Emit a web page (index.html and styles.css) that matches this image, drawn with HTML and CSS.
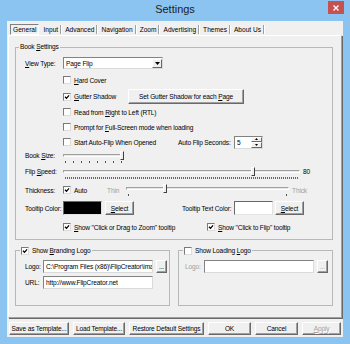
FILE: index.html
```html
<!DOCTYPE html>
<html>
  <head>
    <meta charset="UTF-8" />
    <title>Settings</title>
    <link rel="stylesheet" href="styles.css">
  </head>
  <body>
    <div class="window">
      <div class="titlebar">
        <span class="title">Settings</span>
        <span class="close">
          <svg width="6" height="6" viewBox="0 0 6 6"><path d="M0.5 0.5 L5.5 5.5 M5.5 0.5 L0.5 5.5" stroke="#fff" stroke-width="1.3"/></svg>
        </span>
      </div>

      <div class="client">
        <div class="tabs">
          <span class="tab active">General</span>
          <span class="tab">Input</span>
          <span class="tab">Advanced</span>
          <span class="tab">Navigation</span>
          <span class="tab">Zoom</span>
          <span class="tab">Advertising</span>
          <span class="tab">Themes</span>
          <span class="tab">About Us</span>
        </div>

        <div class="panel">
          <fieldset class="group book">
            <legend>Book <u>S</u>ettings</legend>

            <div class="row row-view">
              <span class="lbl"><u>V</u>iew Type:</span>
              <div class="field combo">
                <span class="combo-text">Page Flip</span>
                <span class="drop"><svg width="5" height="3" viewBox="0 0 5 3"><path d="M0 0 H5 L2.5 3 Z" fill="#000"/></svg></span>
              </div>
            </div>

            <div class="row row-hard">
              <span class="lbl"></span>
              <label class="check"><span class="box"></span><span><u>H</u>ard Cover</span></label>
            </div>

            <div class="row row-gutter">
              <span class="lbl"></span>
              <label class="check c-gutter"><span class="box"><svg width="6" height="6" viewBox="0 0 6 6"><path d="M1 2.8 L2.5 4.3 L5 1.4" fill="none" stroke="#000" stroke-width="1.3"/></svg></span><span><u>G</u>utter Shadow</span></label>
              <button class="btn btn-gutter">Set Gutter Shadow for each <u>P</u>age</button>
            </div>

            <div class="row row-rtl">
              <span class="lbl"></span>
              <label class="check"><span class="box"></span><span>Read from <u>R</u>ight to Left (RTL)</span></label>
            </div>

            <div class="row row-prompt">
              <span class="lbl"></span>
              <label class="check"><span class="box"></span><span>Prompt for <u>F</u>ull-Screen mode when loading</span></label>
            </div>

            <div class="row row-auto">
              <span class="lbl"></span>
              <label class="check c-auto"><span class="box"></span><span>Start Auto-Flip When Opened</span></label>
              <span class="lbl-seconds">Auto Flip Seconds:</span>
              <div class="field spin">
                <span class="spin-val">5</span>
                <span class="spin-btns">
                  <span class="spin-btn"><svg width="3" height="2" viewBox="0 0 3 2"><path d="M0 2 H3 L1.5 0 Z" fill="#000"/></svg></span>
                  <span class="spin-btn"><svg width="3" height="2" viewBox="0 0 3 2"><path d="M0 0 H3 L1.5 2 Z" fill="#000"/></svg></span>
                </span>
              </div>
            </div>

            <div class="row row-slider row-size">
              <span class="lbl">Book <u>S</u>ize:</span>
              <div class="slider slider-size">
                <div class="track"></div>
                <div class="ticks"></div>
                <span class="thumb" style="left: 57px"></span>
              </div>
            </div>

            <div class="row row-slider row-speed">
              <span class="lbl">Flip <u>S</u>peed:</span>
              <div class="slider slider-speed">
                <div class="track"></div>
                <div class="ticks"></div>
                <span class="thumb" style="left: 188px"></span>
              </div>
              <span class="slider-value">80</span>
            </div>

            <div class="row row-thick">
              <span class="lbl">Thickness:</span>
              <label class="check c-thick"><span class="box"><svg width="6" height="6" viewBox="0 0 6 6"><path d="M1 2.8 L2.5 4.3 L5 1.4" fill="none" stroke="#000" stroke-width="1.3"/></svg></span><span>Auto</span></label>
              <span class="muted thin">Thin</span>
              <div class="slider slider-thick">
                <div class="track"></div>
                <div class="ticks"></div>
                <span class="thumb" style="left: 37px"></span>
              </div>
              <span class="muted thick">Thick</span>
            </div>

            <div class="row row-color">
              <span class="lbl">Tooltip Color:</span>
              <span class="swatch swatch-black"></span>
              <button class="btn btn-select"><u>S</u>elect</button>
              <span class="lbl-textcolor">Tooltip Text Color:</span>
              <span class="swatch"></span>
              <button class="btn btn-select btn-select2"><u>S</u>elect</button>
            </div>

            <div class="row row-show">
              <span class="lbl"></span>
              <label class="check c-zoom"><span class="box"><svg width="6" height="6" viewBox="0 0 6 6"><path d="M1 2.8 L2.5 4.3 L5 1.4" fill="none" stroke="#000" stroke-width="1.3"/></svg></span><span><u>S</u>how "Click or Drag to Zoom" tooltip</span></label>
              <label class="check"><span class="box"><svg width="6" height="6" viewBox="0 0 6 6"><path d="M1 2.8 L2.5 4.3 L5 1.4" fill="none" stroke="#000" stroke-width="1.3"/></svg></span><span><u>S</u>how "Click to Flip" tooltip</span></label>
            </div>
          </fieldset>

          <div class="groups">
            <fieldset class="group logo-group">
              <legend>
                <label class="check"><span class="box"><svg width="6" height="6" viewBox="0 0 6 6"><path d="M1 2.8 L2.5 4.3 L5 1.4" fill="none" stroke="#000" stroke-width="1.3"/></svg></span><span>Show <u>B</u>randing Logo</span></label>
              </legend>
              <div class="row row-logo">
                <span class="lbl-small">Logo:</span>
                <div class="field path">C:\Program Files (x86)\FlipCreator\ima</div>
                <button class="btn btn-more">...</button>
              </div>
              <div class="row row-url">
                <span class="lbl-small">URL:</span>
                <div class="field path">http://www.FlipCreator.net</div>
              </div>
            </fieldset>

            <fieldset class="group logo-group loading">
              <legend>
                <label class="check"><span class="box"></span><span>Show Loading <u>L</u>ogo</span></label>
              </legend>
              <div class="row row-logo">
                <span class="lbl-small muted">Logo:</span>
                <div class="field path"></div>
                <button class="btn btn-more disabled">...</button>
              </div>
            </fieldset>
          </div>
        </div>

        <div class="footer">
          <button class="btn btn-save">Save as Template...</button>
          <button class="btn btn-load">Load Template...</button>
          <button class="btn btn-restore">Restore Default Settings</button>
          <button class="btn btn-ok">OK</button>
          <button class="btn btn-cancel">Cancel</button>
          <button class="btn btn-apply disabled"><u>A</u>pply</button>
        </div>
      </div>
    </div>
  </body>
</html>
```

FILE: styles.css
```css
body {
  margin: 0;
  font-family: "Liberation Sans", Arial, sans-serif;
  font-size: 6.6px;
  letter-spacing: -0.15px;
  color: #000;
}

u {
  text-underline-offset: 1px;
}

.window {
  width: 350px;
  height: 344px;
  background: #8cc4f1;
  display: flex;
  flex-direction: column;
}

/* title bar */
.titlebar {
  height: 21px;
  flex: none;
  display: grid;
  grid-template-columns: 1fr auto 1fr;
  align-items: start;
}

.title {
  grid-column: 2;
  font-size: 11px;
  letter-spacing: 0;
  line-height: 19px;
  color: #222;
}

.close {
  grid-column: 3;
  justify-self: end;
  width: 16px;
  height: 13px;
  margin: 1px 6px 0 0;
  background: #c75050;
  display: flex;
  align-items: center;
  justify-content: center;
}

.client {
  flex: 1;
  margin: 0 7px 7px;
  background: #f0f0f0;
  display: flex;
  flex-direction: column;
}

/* tabs */
.tabs {
  display: flex;
  align-items: center;
  height: 11px;
  margin: 3px 0 0 3px;
  letter-spacing: 0;
}

.tab {
  padding: 0 2px 0 4px;
  line-height: 9px;
  border-right: 1px solid #a0a0a0;
  box-shadow: 1px 0 0 #fff;
}

.tab.active {
  padding: 0 2px;
  border: 1px solid;
  border-color: #808080 #fff #fff #808080;
  box-shadow: none;
}

.panel {
  height: 283px;
  margin: 0 1px;
  box-sizing: border-box;
  border: 1px solid;
  border-color: #fff #a0a0a0 #a0a0a0 #fff;
  box-shadow: 1px 1px 0 #696969;
  padding: 7px 8px 0 6px;
}

/* group boxes */
.group {
  margin: 0;
  padding: 0 0 5px;
  min-width: 0;
  border: 1px solid #b8b8b8;
}

.group legend {
  margin-left: 3px;
  padding: 0 1px;
  line-height: 8px;
}

.row {
  display: flex;
  align-items: center;
  height: 14px;
  padding-left: 9px;
}

.lbl {
  width: 38px;
  flex: none;
  white-space: nowrap;
}

.row-view { margin-top: 5px; }
.row-hard { margin-top: 3px; }
.row-gutter { margin-top: 2px; height: 15px; }
.row-rtl { margin-top: 1px; }
.row-prompt { margin-top: 1px; }
.row-auto { margin-top: 1px; }
.row-size { margin-top: 1px; }
.row-speed { margin-top: 2px; }
.row-thick { margin-top: 2px; height: 16px; }
.row-color { margin-top: 3px; }
.row-show { margin-top: 5px; }

.row-slider {
  align-items: flex-start;
}

.row-slider .lbl,
.slider-value {
  line-height: 12px;
}

/* checkboxes */
.check {
  display: flex;
  align-items: center;
  gap: 3px;
  flex: none;
  white-space: nowrap;
}

.box {
  width: 8px;
  height: 8px;
  box-sizing: border-box;
  flex: none;
  background: #fff;
  border: 1px solid;
  border-color: #7a7a7a #dcdcdc #dcdcdc #7a7a7a;
}

.box svg {
  display: block;
}

.c-gutter { width: 65px; }
.c-auto { width: 115px; }
.c-thick { width: 44px; }
.c-zoom { width: 144px; }

/* buttons */
.btn {
  box-sizing: border-box;
  height: 14px;
  padding: 0;
  border: 1px solid;
  border-color: #fff #696969 #696969 #fff;
  box-shadow: inset -1px -1px 0 #a0a0a0;
  background: #f0f0f0;
  font: inherit;
  letter-spacing: inherit;
  color: #000;
  white-space: nowrap;
  flex: none;
}

.btn.disabled {
  color: #a0a0a0;
  text-shadow: 1px 1px 0 #fff;
}

.btn-gutter {
  width: 116px;
  height: 15px;
}

.btn-select {
  width: 29px;
  margin-left: 3px;
}

.btn-select2 {
  margin-left: 2px;
}

.btn-more {
  width: 11px;
  height: 13px;
  margin-left: 3px;
  line-height: 9px;
}

/* text fields */
.field {
  box-sizing: border-box;
  background: #fff;
  border: 1px solid;
  border-color: #828282 #dadada #dadada #828282;
  flex: none;
}

.combo {
  width: 100px;
  height: 12px;
  display: flex;
  align-items: center;
}

.combo-text {
  flex: 1;
  padding-left: 2px;
}

.drop {
  width: 10px;
  height: 9px;
  box-sizing: border-box;
  border: 1px solid;
  border-color: #fff #696969 #696969 #fff;
  background: #f0f0f0;
  display: flex;
  align-items: center;
  justify-content: center;
}

.drop svg {
  display: block;
}

.lbl-seconds {
  width: 56px;
  flex: none;
  white-space: nowrap;
}

.spin {
  width: 29px;
  height: 13px;
  display: flex;
}

.spin-val {
  flex: 1;
  padding-left: 2px;
  line-height: 11px;
}

.spin-btns {
  width: 11px;
  display: flex;
  flex-direction: column;
}

.spin-btn {
  flex: 1;
  box-sizing: border-box;
  border: 1px solid;
  border-color: #fff #696969 #696969 #fff;
  background: #f0f0f0;
  display: flex;
  align-items: center;
  justify-content: center;
}

.spin-btn svg {
  display: block;
}

/* sliders */
.slider {
  position: relative;
  height: 12px;
  flex: none;
}

.row-slider .slider {
  margin-top: 1px;
}

.track {
  height: 3px;
  margin-top: 3px;
  box-sizing: border-box;
  border: 1px solid;
  border-color: #a0a0a0 #fff #fff #a0a0a0;
  background: #e6e6e6;
}

.ticks {
  height: 2px;
  margin: 4px 2px 0;
}

.thumb {
  position: absolute;
  top: 0;
  width: 4px;
  height: 9px;
  box-sizing: border-box;
  border: 1px solid;
  border-color: #fff #404040 #404040 #fff;
  background: #f0f0f0;
}

.slider-size { width: 61px; }
.slider-speed { width: 237px; }
.slider-thick { width: 163px; }

.slider-size .ticks {
  background: repeating-linear-gradient(90deg, #555 0 1px, transparent 1px 8px);
}

.slider-speed .ticks {
  background: repeating-linear-gradient(90deg, #666 0 1px, transparent 1px 2px);
}

.slider-thick .ticks {
  background:
    linear-gradient(#555, #555) left / 1px 2px no-repeat,
    linear-gradient(#555, #555) right / 1px 2px no-repeat;
}

.slider-value {
  margin-left: 3px;
}

.muted {
  color: #a0a0a0;
}

.thin {
  width: 19px;
  flex: none;
}

.thick {
  margin-left: 3px;
}

/* colours */
.swatch {
  width: 39px;
  height: 14px;
  box-sizing: border-box;
  flex: none;
  background: #fff;
  border: 1px solid;
  border-color: #696969 #e3e3e3 #e3e3e3 #696969;
}

.swatch-black {
  background: #000;
}

.lbl-textcolor {
  width: 52px;
  margin-left: 48px;
  flex: none;
  white-space: nowrap;
}

/* logo boxes */
.groups {
  display: flex;
  gap: 8px;
  margin-top: 6px;
}

.logo-group {
  flex: 1;
  height: 60px;
  box-sizing: border-box;
}

.logo-group legend {
  margin-left: 4px;
  line-height: 9px;
}

.row-logo {
  height: 13px;
  margin-top: 5px;
}

.row-url {
  height: 13px;
  margin-top: 3px;
}

.loading .row {
  padding-left: 6px;
}

.lbl-small {
  width: 18px;
  flex: none;
}

.loading .lbl-small {
  width: 19px;
}

.path {
  width: 110px;
  height: 13px;
  padding-left: 2px;
  line-height: 11px;
  overflow: hidden;
  white-space: nowrap;
}

/* bottom buttons */
.footer {
  display: flex;
  gap: 4px;
  height: 13px;
  margin-top: 4px;
  padding-left: 2px;
}

.footer .btn {
  height: 13px;
}

.btn-save { width: 60px; }
.btn-load { width: 52px; }
.btn-restore { width: 75px; }
.btn-ok { width: 43px; }
.btn-cancel { width: 43px; }
.btn-apply { width: 39px; }
```
